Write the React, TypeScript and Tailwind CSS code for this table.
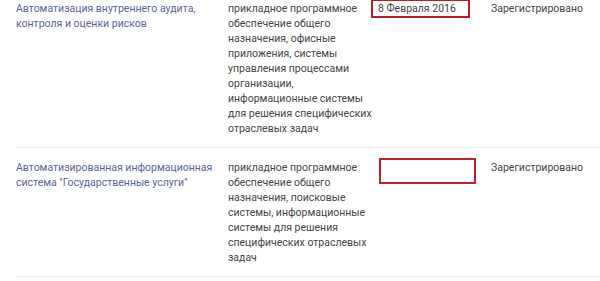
import React from 'react';

interface Row {
  title: string;
  category: string;
  date?: string;
  status: string;
}

const rows: Row[] = [
  {
    title: 'Автоматизация внутреннего аудита, контроля и оценки рисков',
    category:
      'прикладное программное обеспечение общего назначения, офисные приложения, системы управления процессами организации, информационные системы для решения специфических отраслевых задач',
    date: '8 Февраля 2016',
    status: 'Зарегистрировано',
  },
  {
    title: 'Автоматизированная информационная система "Государственные услуги"',
    category:
      'прикладное программное обеспечение общего назначения, поисковые системы, информационные системы для решения специфических отраслевых задач',
    status: 'Зарегистрировано',
  },
];

export default function App() {
  return (
    <div
      className="w-[600px] h-[281px] overflow-hidden bg-white text-[10.5px] leading-[15px] text-[#444]"
      style={{ fontFamily: 'Roboto, "Liberation Sans", sans-serif' }}
    >
      <div className="pl-4">
        {rows.map((row, i) => (
          <div
            key={i}
            className={`grid grid-cols-[212px_150px_113px_1fr] border-b border-[#ededed] ${
              i === 0 ? 'pt-[1px] pb-[11px]' : 'pt-[12px] pb-[11px]'
            }`}
          >
            <div className="w-[200px] text-[#58639c]">{row.title}</div>
            <div className="w-[146px]">{row.category}</div>
            <div>
              {row.date ? (
                <div className="-ml-[7px] -mt-[2px] w-[99px] border-2 border-[#b71c24] pl-[5px]">
                  {row.date}
                </div>
              ) : (
                <div className="ml-[1px] -mt-[2px] h-[26px] w-[97px] border-2 border-[#c0202a]" />
              )}
            </div>
            <div>{row.status}</div>
          </div>
        ))}
      </div>
    </div>
  );
}
